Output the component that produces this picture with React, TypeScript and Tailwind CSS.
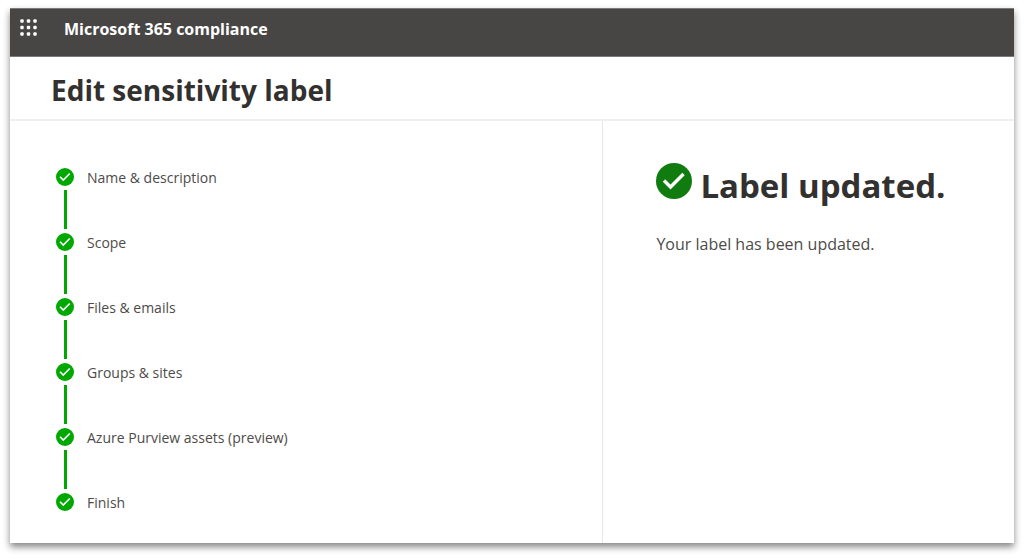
const STEPS = [
  "Name & description",
  "Scope",
  "Files & emails",
  "Groups & sites",
  "Azure Purview assets (preview)",
  "Finish",
];

type CheckIconProps = {
  className: string;
  strokeWidth: number;
};

function CheckIcon({ className, strokeWidth }: CheckIconProps) {
  return (
    <svg viewBox="0 0 36 36" className={className} aria-hidden="true">
      <circle cx="18" cy="18" r="18" fill="currentColor" />
      <path d="M8 17.5 L14.5 24 L27.5 11" fill="none" stroke="#fff" strokeWidth={strokeWidth} />
    </svg>
  );
}

function WaffleIcon() {
  return (
    <svg viewBox="0 0 18 18" className="size-[18px]" fill="#fff" aria-hidden="true">
      {[2, 8.5, 15].map((cy) =>
        [2, 8.5, 15].map((cx) => (
          <rect key={`${cx}-${cy}`} x={cx - 1.7} y={cy - 1.7} width="3.4" height="3.4" rx="1" />
        )),
      )}
    </svg>
  );
}

function AppHeader() {
  return (
    <header className="flex h-[49px] items-start border-y border-[#7b7a79] bg-[#484644] pl-[10px] text-white">
      <button type="button" aria-label="App launcher" className="mt-[10px] flex">
        <WaffleIcon />
      </button>
      <span className="ml-[26px] mt-2 text-base leading-6 font-bold">Microsoft 365 compliance</span>
    </header>
  );
}

function StepList() {
  return (
    <ol className="flex flex-col pl-[46px] pt-[47px]">
      {STEPS.map((step, index) => (
        <li key={step} className="flex gap-[13px]">
          <div className="flex flex-col items-center">
            <CheckIcon className="size-[18px] text-[#00a800]" strokeWidth={3.4} />
            {index < STEPS.length - 1 ? (
              <span className="my-1 h-[39px] w-[3px] bg-[#00a800]" />
            ) : null}
          </div>
          <span className="text-sm leading-5 text-[#4d4b49]">{step}</span>
        </li>
      ))}
    </ol>
  );
}

export default function App() {
  return (
    <div className="flex min-h-screen flex-col bg-white px-[10px] pt-2 pb-4 font-['Open_Sans','Noto_Sans',sans-serif]">
      <div className="flex flex-1 flex-col bg-white shadow-[0_4px_7px_0_rgba(0,0,0,0.48)]">
        <AppHeader />
        <div className="border-b-2 border-[#efefef] px-[41px] pt-3 pb-2">
          <h1 className="text-[28px] leading-[42px] font-bold text-[#323130]">Edit sensitivity label</h1>
        </div>
        <main className="flex flex-1">
          <section className="flex-1" aria-label="Steps">
            <StepList />
          </section>
          <section className="w-[41%] border-l border-[#e6e6e6] pl-[53px] pt-[42px]">
            <div className="flex items-start gap-2">
              <CheckIcon className="size-9 text-[#107c10]" strokeWidth={3.4} />
              <h2 className="text-[33px] leading-[46px] font-bold text-[#323130]">Label updated.</h2>
            </div>
            <p className="mt-[23px] text-base leading-6 text-[#4d4b49]">Your label has been updated.</p>
          </section>
        </main>
      </div>
    </div>
  );
}
